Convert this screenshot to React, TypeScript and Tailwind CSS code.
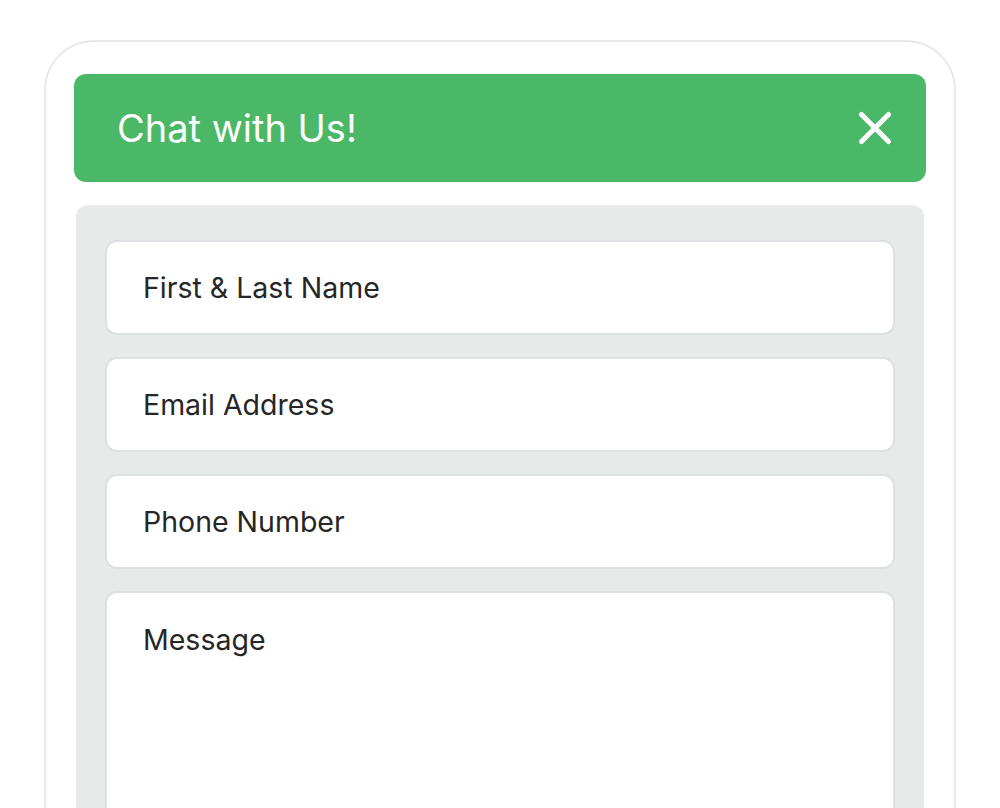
import React from 'react';

const font = { fontFamily: 'Inter, "Noto Sans", sans-serif' };

const Field: React.FC<{ placeholder: string }> = ({ placeholder }) => (
  <input
    type="text"
    placeholder={placeholder}
    className="h-[95px] w-full shrink-0 rounded-[12px] border-2 border-[#dde1e3] bg-white px-9 text-[28.5px] text-[#262626] outline-none placeholder:text-[#262626]"
  />
);

const App: React.FC = () => {
  return (
    <div className="h-screen overflow-hidden bg-white pt-10 px-[44px]" style={font}>
      <div className="h-[800px] rounded-t-[50px] border-2 border-b-0 border-[#e9e9e9] px-[28px] pt-[32px]">
        {/* Header */}
        <div className="flex h-[108px] items-center justify-between rounded-[12px] bg-[#4ab866] pl-[43px] pr-[34px]">
          <h1 className="text-[38px] font-normal text-white">Chat with Us!</h1>
          <button aria-label="Close" className="text-white">
            <svg width="34" height="34" viewBox="0 0 34 34" fill="none">
              <path d="M3.5 3.5L30.5 30.5M30.5 3.5L3.5 30.5" stroke="currentColor" strokeWidth="5" strokeLinecap="round" />
            </svg>
          </button>
        </div>

        {/* Form */}
        <div className="mx-[2px] mt-[23px] flex flex-col gap-[22px] rounded-t-[12px] bg-[#e8eae9] px-[29px] pt-[35px] pb-10">
          <Field placeholder="First & Last Name" />
          <Field placeholder="Email Address" />
          <Field placeholder="Phone Number" />
          <textarea
            placeholder="Message"
            className="h-[300px] w-full shrink-0 resize-none rounded-[12px] border-2 border-[#dde1e3] bg-white px-9 pt-[28px] text-[28.5px] leading-[1.3] text-[#262626] outline-none placeholder:text-[#262626]"
          />
        </div>
      </div>
    </div>
  );
};

export default App;
